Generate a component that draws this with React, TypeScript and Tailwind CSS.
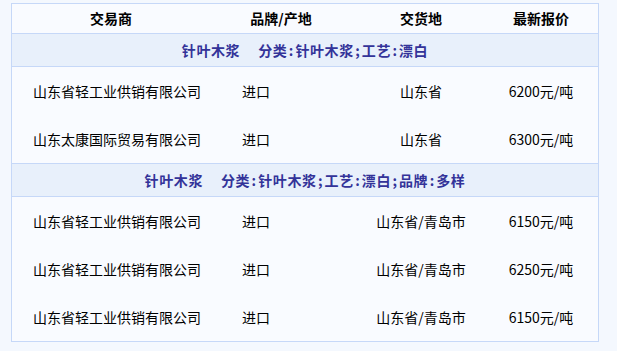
const font = { fontFamily: '"Noto Sans CJK SC", "Noto Sans", sans-serif' }

interface Row { company: string; brand: string; place: string; price: string }
interface Group { title: string; spec: string; rows: Row[] }

const groups: Group[] = [
  {
    title: '针叶木浆',
    spec: '分类:针叶木浆;工艺:漂白',
    rows: [
      { company: '山东省轻工业供销有限公司', brand: '进口', place: '山东省', price: '6200元/吨' },
      { company: '山东太康国际贸易有限公司', brand: '进口', place: '山东省', price: '6300元/吨' },
    ],
  },
  {
    title: '针叶木浆',
    spec: '分类:针叶木浆;工艺:漂白;品牌:多样',
    rows: [
      { company: '山东省轻工业供销有限公司', brand: '进口', place: '山东省/青岛市', price: '6150元/吨' },
      { company: '山东省轻工业供销有限公司', brand: '进口', place: '山东省/青岛市', price: '6250元/吨' },
      { company: '山东省轻工业供销有限公司', brand: '进口', place: '山东省/青岛市', price: '6150元/吨' },
    ],
  },
]

const cols = 'grid grid-cols-[198px_142px_138px_1fr]'

// 분류 문자열의 : ; 는 반각 폭으로 넓혀서 표시
const spaced = (s: string) =>
  s.split(/([:;])/).map((p, i) =>
    p === ':' || p === ';'
      ? <span key={i} className="inline-block w-[8px] text-center">{p}</span>
      : <span key={i}>{p}</span>)

export default function App() {
  return (
    <div className="w-[617px] h-[351px] bg-[#f4f8fe] pt-[3px] pl-[11px]" style={font}>
      <div className="w-[588px] border border-[#c6d8f8] bg-[#f9fbff] text-[14px] text-black">
        {/* 표头 */}
        <div className={`${cols} h-[30px] items-center font-bold border-b border-[#c6d8f8]`}>
          <div className="text-center">交易商</div>
          <div className="text-center">品牌/产地</div>
          <div className="text-center">交货地</div>
          <div className="text-center pr-[6px]">最新报价</div>
        </div>

        {groups.map((g, gi) => (
          <div key={gi} className={gi < groups.length - 1 ? 'border-b border-[#c6d8f8]' : ''}>
            <div className="h-[33px] flex items-center justify-center bg-[#e8f0fb] border-b border-[#c6d8f8] font-bold text-[#333399] tracking-[0.6px]">
              <span>{g.title}</span>
              <span className="ml-[18px]">{spaced(g.spec)}</span>
            </div>
            {g.rows.map((r, ri) => (
              <div key={ri} className={`${cols} h-[48px] items-center`}>
                <div className="pl-[21px]">{r.company}</div>
                <div className="pl-[32px]">{r.brand}</div>
                <div className="text-center">{r.place}</div>
                <div className="text-center pr-[6px]">{r.price}</div>
              </div>
            ))}
          </div>
        ))}
      </div>
    </div>
  )
}
